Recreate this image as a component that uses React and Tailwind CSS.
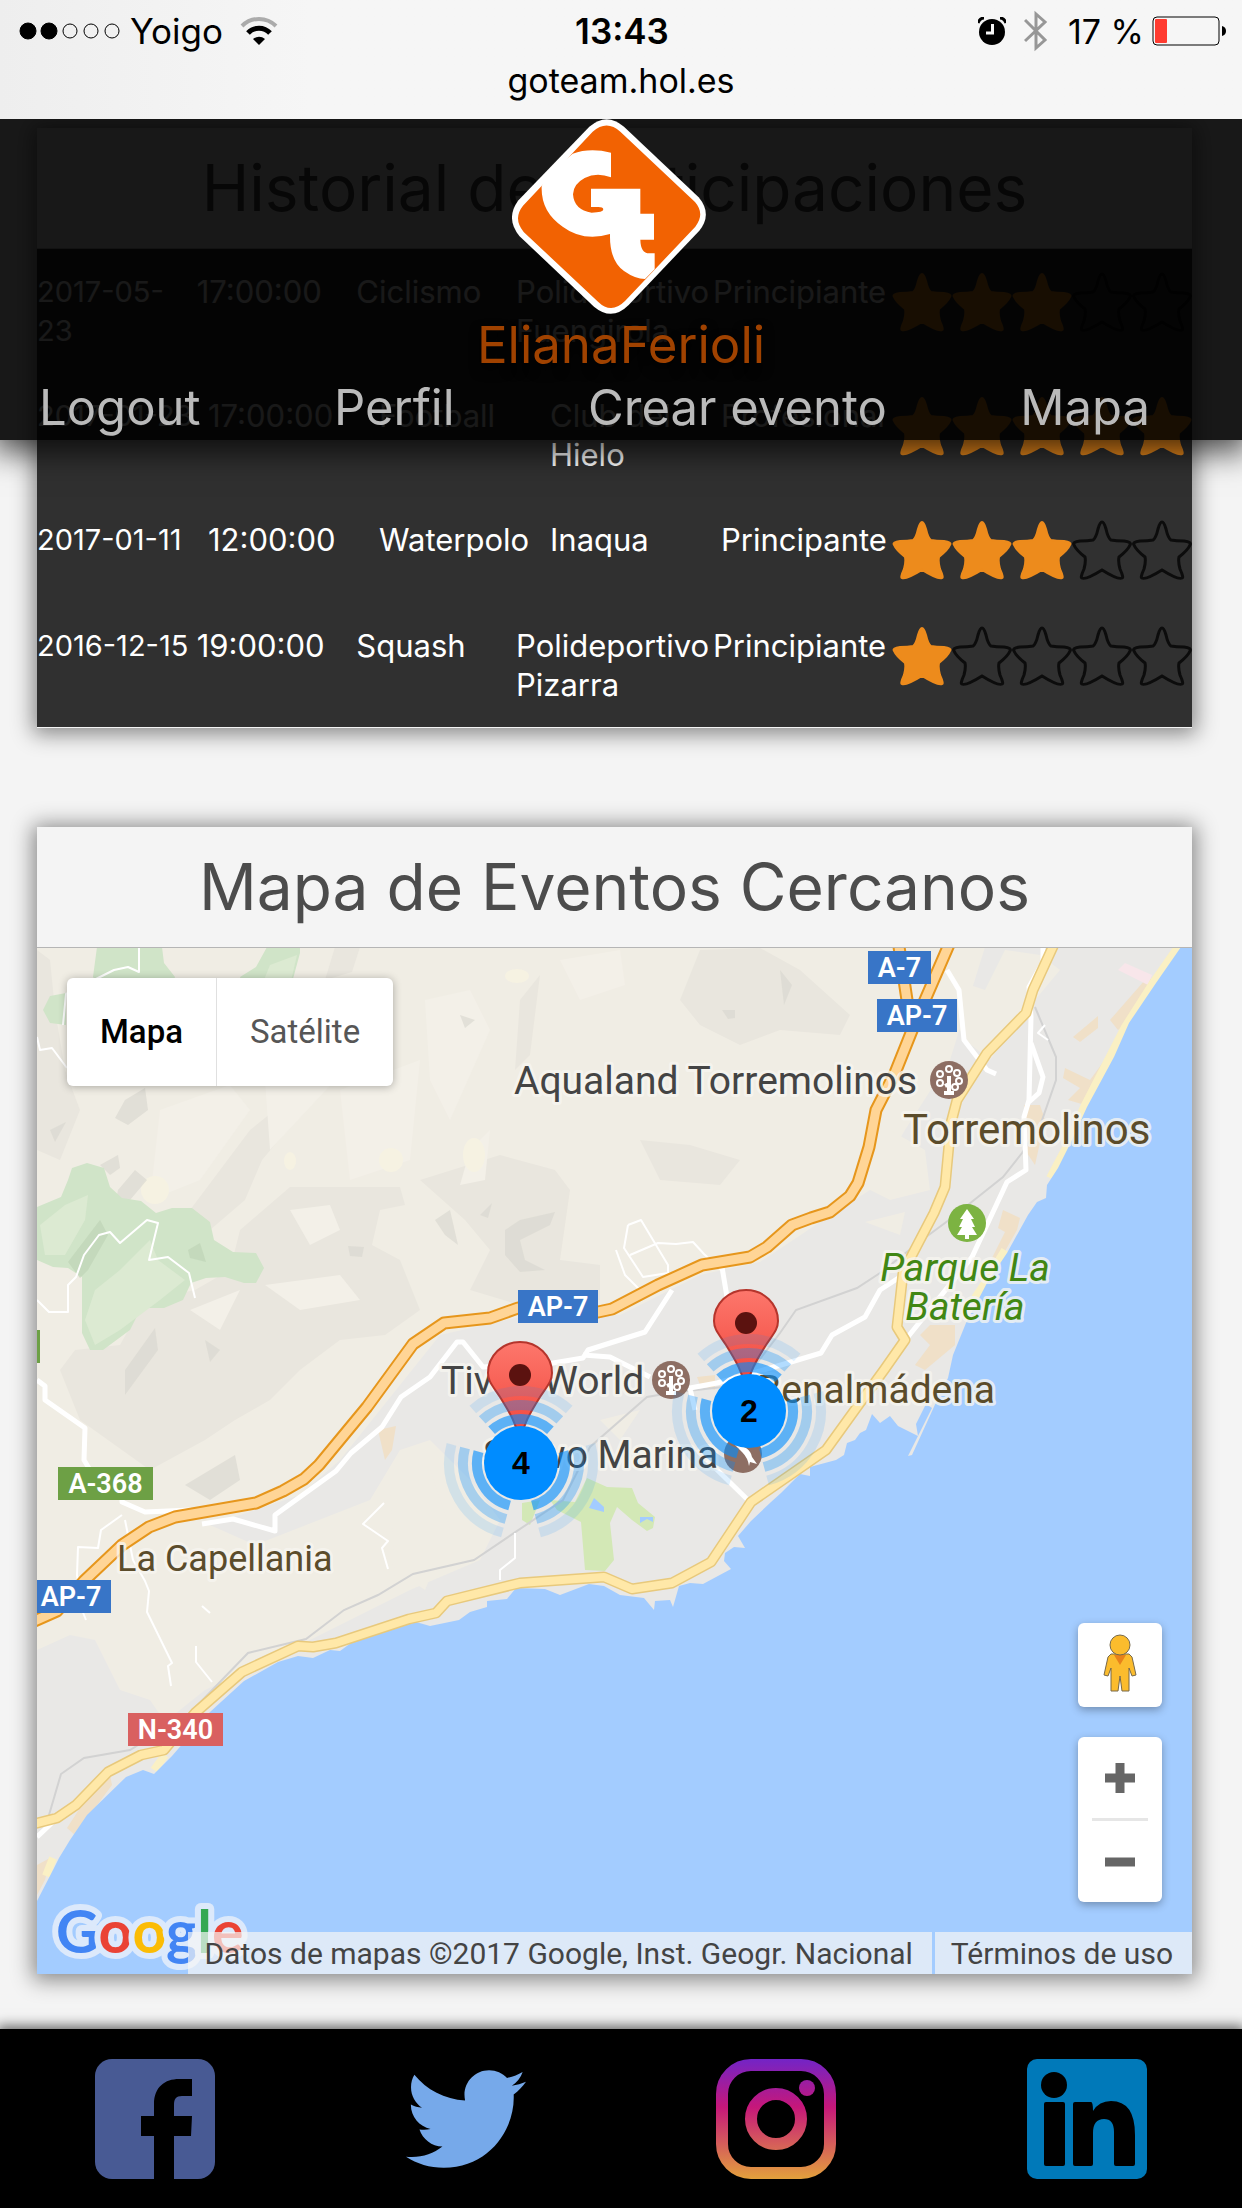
import React from "react";
import { FaTwitter } from "react-icons/fa";

const events = [
  { date: ["2017-05-", "23"], time: "17:00:00", sport: "Ciclismo", place: ["Polideportivo", "Fuengirola"], level: "Principiante", stars: 3 },
  { date: ["2017-01-23"], time: "17:00:00", sport: "Football", place: ["Club del", "Hielo"], level: "Profesional", stars: 5 },
  { date: ["2017-01-11"], time: "12:00:00", sport: "Waterpolo", place: ["Inaqua"], level: "Principante", stars: 3 },
  { date: ["2016-12-15"], time: "19:00:00", sport: "Squash", place: ["Polideportivo", "Pizarra"], level: "Principiante", stars: 1 },
];

function SignalDots() {
  return (
    <svg className="h-6 w-[104px]" viewBox="0 0 104 24" aria-hidden="true">
      {[0, 1, 2, 3, 4].map((i) => (
        <circle key={i} cx={10 + i * 21} cy="12" r={i < 2 ? 8 : 7} fill={i < 2 ? "#000" : "none"} stroke="#000" strokeWidth="1" />
      ))}
    </svg>
  );
}

function Wifi() {
  return (
    <svg className="h-8 w-10" viewBox="0 0 40 32" fill="none" aria-hidden="true">
      <path d="M3 11A24 24 0 0 1 37 11" stroke="#ababab" strokeWidth="4" />
      <path d="M9 18A15 15 0 0 1 31 18" stroke="#000" strokeWidth="5" />
      <path d="M14 24A9 9 0 0 1 26 24L20 30Z" fill="#000" />
    </svg>
  );
}

function Alarm() {
  return (
    <svg className="h-7 w-7" viewBox="0 0 28 28" fill="none" aria-hidden="true">
      <circle cx="14" cy="15" r="13" fill="#000" />
      <path d="M0 6Q2 1 6 1M28 6Q26 1 22 1" stroke="#000" strokeWidth="3" />
      <path d="M14.500 7V16H8" stroke="#f6f6f6" strokeWidth="3" />
    </svg>
  );
}

function Bluetooth() {
  return (
    <svg className="h-[42px] w-6" viewBox="0 0 24 42" fill="none" aria-hidden="true">
      <path d="M1 10L21 30L12 38V4L21 12L1 31" stroke="#979797" strokeWidth="3" />
    </svg>
  );
}

function Battery() {
  return (
    <svg className="h-[30px] w-[74px]" viewBox="0 0 74 30" aria-hidden="true">
      <rect x="1" y="1" width="66" height="28" rx="4" fill="none" stroke="#000" strokeWidth="1" />
      <rect x="3" y="3" width="12" height="24" rx="1" fill="#ff3b30" />
      <path d="M70 10Q74 11 74 15Q74 19 70 20Z" fill="#000" />
    </svg>
  );
}

function Logo() {
  return (
    <svg className="h-[195px] w-[194px]" viewBox="186 27 582 585" role="img" aria-label="GoTeam">
      <path d="M418 50Q470 5 522 50L746 262Q788 312 748 362L536 585Q486 635 432 590L208 378Q166 326 204 272Z" fill="#fff" />
      <path d="M428 65Q470 28 511 65L735 276Q766 312 736 350L525 573Q484 614 444 575L221 366Q188 326 219 287Z" fill="#f26202" />
      <path d="M368 131Q420 112 483 128V202Q440 186 404 204Q370 222 369 253Q372 300 425 308Q460 308 460 298Q459 291 445 291H423V236H571V311H612V389H571Q572 432 600 430H614V478L585 507Q556 507 522 483Q478 452 480 372Q400 396 338 350Q272 305 275 229L290 195Z" fill="#fff" />
    </svg>
  );
}

function Star({ filled }) {
  return (
    <svg className="h-[60px] w-[60px] shrink-0" viewBox="0 0 60 60" aria-hidden="true">
      <path
        d="M30 2Q32 2 34 9Q36 18 39 20Q44 21 52 21Q60 22 58 25Q56 30 47 37Q46 42 48 49Q52 58 50 58Q46 60 30 50Q14 60 10 58Q8 58 12 49Q14 42 13 37Q4 30 2 25Q0 22 8 21Q16 21 21 20Q24 18 26 9Q28 2 30 2Z"
        fill={filled ? "#ed8b1c" : "none"}
        stroke={filled ? "#ed8b1c" : "#0c0c0c"}
        strokeWidth={filled ? "2" : "3"}
      />
    </svg>
  );
}

function Lines({ parts }) {
  return parts.map((p) => (
    <span key={p} className="block whitespace-nowrap">{p}</span>
  ));
}

function History() {
  return (
    <section className="bg-[#f4f4f4] pb-px shadow-[0_2px_20px_4px_rgba(0,0,0,0.45)]">
      <h2 className="border-b border-[#b5b5b5] py-5 text-center text-[64px] leading-20 text-[#4c4c4c]">Historial de Participaciones</h2>
      <table className="block bg-[#303030] text-[31px] leading-[39px] text-white">
        <tbody className="block">
          {events.map((e) => (
            <tr key={e.date.join("")} className="flex items-start py-[23px]">
              <td className="min-w-0 flex-1 text-[29px]"><Lines parts={e.date} /></td>
              <td className="flex-1">{e.time}</td>
              <td className="flex-1">{e.sport}</td>
              <td className={e.place[0] === "Polideportivo" ? "min-w-[197px] flex-1" : "flex-1"}><Lines parts={e.place} /></td>
              <td className={e.level === "Principiante" ? "min-w-[179px] flex-1" : "flex-1"}>{e.level}</td>
              <td className="flex shrink-0" aria-label={e.stars + " de 5"}>
                {[1, 2, 3, 4, 5].map((n) => <Star key={n} filled={n <= e.stars} />)}
              </td>
            </tr>
          ))}
        </tbody>
      </table>
    </section>
  );
}

const motorway = "M951 940L915 1023L895 1073L876 1110L869 1147L858 1183L850 1196L830 1212L811 1218L792 1225L767 1247L750 1257L702 1265L658 1285L612 1309L598 1312L518 1308L490 1318L444 1323L413 1344L367 1407L319 1465L304 1479L283 1491L256 1503L175 1517L149 1527L122 1545L84 1581L57 1611L30 1623";
const coastRoad = "M1056 940L1033 990L1026 1013L987 1053L957 1100L951 1123L945 1187L934 1213L911 1257L903 1273L897 1327L905 1340L884 1370L857 1407L826 1450L751 1502L733 1529L711 1562L672 1583L632 1589L604 1577L520 1583L447 1601L436 1613L409 1619L336 1643L313 1647L298 1646L242 1672L195 1713L164 1750L141 1755L108 1772L76 1805L57 1818L30 1825";
const sea = "M1181 947L1156 983L1129 1023L1114 1057L1087 1107L1072 1140L1058 1168L1047 1185L1046 1198L1037 1202L1028 1215L1007 1253L987 1283L966 1323L953 1355L948 1378L938 1398L912 1455L908 1456L932 1408L926 1404L916 1424L918 1436L898 1426L890 1416L880 1423L872 1414L866 1430L860 1433L855 1440L847 1443L844 1455L836 1460L810 1467V1476L800 1474L781 1493L771 1502L751 1521L738 1536L745 1548L734 1547L725 1553L724 1561L731 1569L703 1584L690 1583L679 1586L673 1607L670 1600L655 1601L654 1610L644 1598L620 1595L604 1586L589 1584L560 1595L545 1589L516 1588L507 1599L487 1601V1607L470 1612L459 1620L430 1626L416 1622L363 1638L351 1643L340 1651L330 1650L313 1658L298 1656L278 1662L244 1681L210 1712L172 1756L154 1774L143 1770L126 1777L87 1815L70 1840L59 1858L53 1870L37 1901V1974H1192V947Z";
const railway = "M1035 1007L1056 1057V1080L1041 1123L1022 1153L1003 1177L949 1220L926 1237L880 1273L857 1288L796 1310L780 1333L740 1385L670 1393L647 1397L590 1447L563 1500L474 1560L413 1574L378 1595L344 1610L306 1639L248 1653L191 1712L130 1750L84 1758L61 1774L49 1815";
const wideRoads = [
  "M1043 947V962L1029 987L1031 1017L1029 1100L1024 1117L1026 1170L1007 1182L972 1257L907 1338",
  "M947 970L959 990L964 1040L987 1070L996 1074",
  "M1031 1043L1043 1077L1039 1093L1029 1102",
  "M903 1275L880 1290L865 1317L832 1335L821 1353L781 1365L717 1383L690 1388L695 1410",
  "M722 1267L727 1297",
  "M672 1290L645 1332L588 1350L583 1358L553 1363L483 1367L463 1342H457L430 1377L401 1397L382 1427L351 1453L336 1471L275 1515V1531L233 1519L202 1524",
  "M583 1355L610 1357L650 1377",
  "M707 1460L750 1502",
  "M37 1380L45 1386V1400L85 1428L84 1460L90 1470",
  "M122 1490V1502L145 1512L191 1510",
  "M57 1818L37 1837",
];
const thinRoads = [
  "M37 1300L49 1312H68V1285L76 1277L84 1255L99 1235L110 1232L120 1243L147 1220L158 1223L149 1260L168 1257L189 1273L195 1298",
  "M139 947V972L128 967L114 970L66 994L63 1025",
  "M37 1037L40 1050L52 1048L67 1068",
  "M122 1515L101 1530L98 1548L78 1547L77 1575L82 1610L86 1620",
  "M125 1520L133 1560L145 1581L149 1591L147 1612L172 1663L168 1666L171 1686",
  "M196 1646V1662L212 1682",
  "M384 1503L363 1524L388 1541L382 1548L388 1569",
  "M628 1225L641 1220L668 1265V1273L643 1277L624 1248L628 1225M630 1255L658 1243L676 1244L693 1242L704 1254L721 1270",
  "M616 1250L625 1275L640 1290",
  "M515 1533V1558L500 1570V1580",
  "M1045 1025L1038 1033L1048 1040",
  "M202 1606L210 1613",
];
const hills = [
  "M37 950L50 960L55 1010L65 1070L80 1110L60 1160L37 1150Z",
  "M335 947H360L352 972L325 980Z",
  "M250 1130L300 1090L330 1075L300 1115L262 1160L245 1200L210 1230L190 1210Z",
  "M290 1187H400L405 1205L380 1210L372 1245L400 1260L420 1310L385 1335L340 1340L300 1370L270 1400L235 1420L205 1440L150 1470L80 1420L60 1370L75 1350L120 1345L145 1300L195 1290L230 1270L240 1230Z",
  "M420 1180L500 1155L555 1170L570 1190L560 1260L600 1265V1300L520 1305L470 1290L490 1250L465 1220Z",
  "M700 950L760 948L800 970L850 1015L840 1035L780 1030L740 1045L700 1025L680 1000Z",
  "M640 1140L690 1145L740 1160L720 1185L660 1180Z",
  "M520 1000L540 975L530 1055L515 1070Z",
];
const ridges = [
  "M125 1100L145 1088L148 1110L128 1125L115 1118Z",
  "M100 1165L118 1155L120 1168L110 1175Z",
  "M118 1190L135 1170L147 1180L130 1200L115 1205Z",
  "M505 1230L520 1220L555 1212L550 1225L520 1240L525 1260L545 1270L520 1272L505 1255Z",
  "M435 1220L450 1210L458 1245L445 1235Z",
  "M480 1215L492 1203L488 1218Z",
  "M348 1246L364 1247L362 1257L350 1256Z",
  "M125 1370L155 1328L158 1350L125 1395Z",
  "M205 1340L220 1350L210 1362Z",
  "M185 1485L235 1455L240 1480L210 1500Z",
  "M722 1010L735 1010V1018L728 1019Z",
  "M460 1015L475 1020L465 1028Z",
  "M780 970L792 985L784 1005Z",
  "M50 1130L66 1122L55 1142Z",
];
const light = [
  "M160 1110L230 1085L250 1110L200 1180L150 1200Z",
  "M340 1090L420 1060L410 1160L350 1180Z",
  "M425 1000L470 990L490 1030L450 1120L430 1080Z",
  "M265 1080L340 1075L270 1150Z",
  "M560 960L620 950L625 985L580 1000Z",
  "M265 1285L340 1275L360 1300L300 1310Z",
  "M290 1210L330 1205L340 1230L310 1245Z",
  "M190 1310L240 1290L220 1330Z",
  "M470 1150L490 1130L485 1180L460 1185Z",
];

const halo = { stroke: "#f7f5f0", strokeOpacity: 0.8, strokeWidth: 6, strokeLinejoin: "round", paintOrder: "stroke" };

function Shield({ x, y, w, label, color }) {
  return (
    <g>
      <rect x={x} y={y} width={w} height="33" fill={color} />
      <text x={x + w / 2} y={y + 26} textAnchor="middle" fontSize="27" fontWeight="600" fill="#fff">{label}</text>
    </g>
  );
}

function ParkPoi({ x, y }) {
  return (
    <g transform={"translate(" + x + " " + y + ")"} stroke="#fff" fill="none">
      <circle r="19" fill="#8d6e63" stroke="none" />
      <path d="M0 -4V12M-5 13H5M-4 6L0 4" strokeWidth="4" />
      {[[-9, 3], [-9, -6], [0, -11], [8, -7], [10, 1], [6, 7]].map(([a, b]) => (
        <circle key={a + "," + b} cx={a} cy={b} r="3" strokeWidth="2" />
      ))}
    </g>
  );
}

function Pin({ x, y }) {
  return (
    <g transform={"translate(" + x + " " + y + ")"}>
      <path d="M0 66C-3 50 -10 38 -20 22C-28 10 -32 6 -32 -2A32 31 0 0 1 32 -2C32 6 28 10 20 22C10 38 3 50 0 66Z" fill="url(#pin)" stroke="#b5352c" strokeWidth="2" />
      <circle r="11" fill="#5b120f" />
    </g>
  );
}

function arc(r, from, to) {
  const p = (deg) => {
    const t = (deg * Math.PI) / 180;
    return (r * Math.cos(t)).toFixed(1) + " " + (r * Math.sin(t)).toFixed(1);
  };
  return "M" + p(from) + "A" + r + " " + r + " 0 0 1 " + p(to);
}

function Cluster({ x, y, count }) {
  const rings = [[44, 0.6], [58, 0.3], [72, 0.12]];
  return (
    <g transform={"translate(" + x + " " + y + ")"}>
      {rings.map(([r, o]) => (
        <path key={r} d={arc(r, -132, -48) + arc(r, -15, 75) + arc(r, 105, 195)} fill="none" stroke="#008cff" strokeOpacity={o} strokeWidth="10" />
      ))}
      <circle r="37" fill="#008cff" />
      <text y="11" textAnchor="middle" fontSize="32" fontWeight="700" fontFamily="Liberation Sans, sans-serif" fill="#000">{count}</text>
    </g>
  );
}

function MapDrawing() {
  return (
    <svg className="block h-auto w-full" viewBox="37 948 1155 1026" fontFamily="Roboto, sans-serif" role="img" aria-label="Mapa de eventos">
      <defs>
        <linearGradient id="pin" x1="0" y1="0" x2="0" y2="1">
          <stop offset="0" stopColor="#fd776c" />
          <stop offset="1" stopColor="#f0443a" />
        </linearGradient>
      </defs>
      <rect x="37" y="947" width="1155" height="1027" fill="#f0ede4" />
      <g fill="#e9e6de">{hills.map((d) => <path key={d} d={d} />)}</g>
      <g fill="#f3f0e8">{light.map((d) => <path key={d} d={d} />)}</g>
      <g fill="#f6f2e2">
        <ellipse cx="391" cy="1160" rx="12" ry="12" /><ellipse cx="474" cy="1155" rx="11" ry="17" /><ellipse cx="290" cy="1161" rx="6" ry="9" />
        <ellipse cx="517" cy="976" rx="12" ry="7" /><ellipse cx="155" cy="1190" rx="14" ry="14" />
      </g>
      <path d="M985 947L950 1060L905 1130L870 1190L820 1222L760 1262L700 1275L620 1315L520 1317L440 1335L400 1385L340 1460L300 1495L210 1525L255 1545L370 1500L400 1450L430 1440L470 1480L500 1520L480 1560L410 1590L340 1625L280 1655L205 1690L165 1722L150 1700L120 1690L95 1640L70 1635L37 1650V1974H1192V947Z" fill="#e9e8e6" />
      <g fill="#f0ede4">
        <path d="M940 975L985 990L1005 950L1040 955L1060 970L1035 1000L990 1060L965 1040L950 1010Z" />
        <path d="M890 1130L925 1150L930 1190L890 1200L860 1185Z" />
        <path d="M390 1480L430 1470L450 1530L425 1590L395 1570Z" />
        <path d="M330 1540L385 1525L395 1580L340 1600Z" />
        <path d="M600 1420L640 1410L620 1440Z" />
        <path d="M865 1222L905 1212L900 1235Z" />
      </g>
      <g fill="#d9d7d0">{ridges.map((d) => <path key={d} d={d} opacity="0.65" />)}</g>
      <g fill="#d0e4c8">
        <path d="M68 1180L72 1168L87 1163L104 1168L110 1187L122 1198L141 1201L156 1213L172 1208H192L210 1222L214 1240L233 1252L256 1253L264 1268L256 1283H244L225 1277L206 1278L191 1283L183 1300L164 1308L141 1308L130 1330L103 1350H90L82 1333V1277L68 1268L53 1267L37 1260V1207L61 1197Z" />
        <path d="M97 947L93 977L102 990L170 990L175 977L164 963L162 947Z" />
        <path d="M267 947L256 967L240 977L245 990H290L300 953V947Z" />
        <path d="M43 1010L50 996L66 993V1025L50 1023Z" />
      </g>
      <g fill="#dcead2">
        <path d="M40 1225L65 1205L88 1195L85 1220L65 1255L45 1255Z" />
        <path d="M95 1290L120 1270L150 1240L158 1260L185 1280L160 1300L120 1330L95 1345L85 1320Z" />
        <path d="M270 965L297 955L290 985H262Z" />
      </g>
      <path d="M68 1262L100 1220L108 1235L88 1270L80 1278Z" fill="#bfd4b6" opacity="0.7" />
      <path d="M188 1250L200 1243L206 1262L190 1258Z" fill="#bfd4b6" opacity="0.7" />
      <path d="M587 1478L607 1487L632 1488L638 1503L655 1517L653 1528L647 1531L632 1520L617 1507L610 1523L614 1560L605 1571L585 1570L581 1522L557 1510L550 1500L575 1502ZM522 1503L540 1500L530 1525L522 1520Z" fill="#d3e8b6" />
      <path d="M589 1508L594 1498L604 1507V1512ZM640 1517H653V1522L647 1519L640 1523Z" fill="#a3ccff" />
      <g fill="#f0e0c8">
        <path d="M1073 1037L1098 1016L1098 1028L1080 1042Z" />
        <path d="M1110 1020L1145 980L1158 978L1130 1020L1118 1030Z" />
        <path d="M1065 1068L1090 1080L1112 1050L1110 1065L1085 1105L1068 1100L1080 1088L1063 1078Z" />
        <path d="M1024 1105L1040 1105L1045 1120L1035 1165L1025 1150Z" />
        <path d="M1003 1210L1020 1218L1017 1230L1000 1260L992 1258L1005 1232L998 1228Z" />
        <path d="M930 1325L955 1325L955 1345L925 1370L915 1365L930 1345L920 1335Z" />
        <path d="M378 1430L396 1426L392 1450L385 1460Z" />
        <path d="M80 1808L110 1775L112 1785L75 1835L67 1828Z" />
        <path d="M37 1865L50 1858L45 1880L37 1895Z" />
        <path d="M697 1377L715 1375V1390L700 1385Z" />
      </g>
      <path d="M1125 963L1152 975L1148 985L1118 970Z" fill="#f8e6ea" />
      <g fill="none" stroke="#faf0c4" strokeWidth="8">
        <path d="M1178 947L1153 983L1125 1027L1084 1107L1070 1140L1050 1178" />
        <path d="M1005 1250L985 1283L975 1298M165 1755L154 1770M53 1858L46 1876" />
      </g>
      <path d={sea} fill="#a3ccff" />
      <path d={railway} fill="none" stroke="#d2d2d2" strokeWidth="2" />
      <g fill="none" stroke="#fff" strokeWidth="2" strokeLinejoin="round">{thinRoads.map((d) => <path key={d} d={d} />)}</g>
      <g fill="none" stroke="#fff" strokeWidth="5" strokeLinejoin="round">{wideRoads.map((d) => <path key={d} d={d} />)}</g>
      <path d={coastRoad} fill="none" stroke="#e8c97c" strokeWidth="11" strokeLinejoin="round" />
      <path d={coastRoad} fill="none" stroke="#ffe8a8" strokeWidth="8" strokeLinejoin="round" />
      <path d={"M898 940L907 1000L913 1030" + motorway} fill="none" stroke="#e6961c" strokeWidth="13" strokeLinejoin="round" />
      <path d={"M898 940L907 1000L913 1030" + motorway} fill="none" stroke="#ffd596" strokeWidth="9" strokeLinejoin="round" />

      <Shield x={868} y={951} w={63} label="A-7" color="#3875c7" />
      <Shield x={877} y={999} w={80} label="AP-7" color="#3875c7" />
      <Shield x={518} y={1290} w={80} label="AP-7" color="#3875c7" />
      <Shield x={31} y={1580} w={80} label="AP-7" color="#3875c7" />
      <Shield x={58} y={1467} w={95} label="A-368" color="#6da045" />
      <Shield x={128} y={1713} w={95} label="N-340" color="#d96060" />
      <rect x="37" y="1330" width="3" height="33" fill="#6da045" />

      <g fontSize="39" fill="#444" {...halo}>
        <text x="514" y="1094">Aqualand Torremolinos</text>
        <text x="441" y="1394">Tivoli World</text>
        <text x="483" y="1468">Selwo Marina</text>
      </g>
      <g fill="#5b4c2b" {...halo}>
        <text x="903" y="1144" fontSize="42">Torremolinos</text>
        <text x="757" y="1403" fontSize="39">Benalmádena</text>
        <text x="117" y="1571" fontSize="36">La Capellania</text>
      </g>
      <g fontSize="39" fontStyle="italic" fill="#418713" textAnchor="middle" {...halo}>
        <text x="965" y="1281">Parque La</text>
        <text x="965" y="1320">Batería</text>
      </g>
      <ParkPoi x={949} y={1080} />
      <ParkPoi x={671} y={1380} />
      <circle cx="743" cy="1454" r="19" fill="#8d6e63" />
      <path d="M735 1445Q750 1446 752 1457L757 1464L750 1462L749 1466Q748 1458 742 1452Z" fill="#fff" />
      <circle cx="967" cy="1223" r="19" fill="#7cb342" />
      <path d="M967 1209L974 1219H971L975 1227H972L977 1235H969V1239H965V1235H957L962 1227H959L963 1219H960Z" fill="#fff" />
      <Pin x={520} y={1375} />
      <Pin x={746} y={1323} />
      <Cluster x={521} y={1463} count="4" />
      <Cluster x={749} y={1411} count="2" />
      <text x="56" y="1953" fontSize="59" fontWeight="700" fontFamily="Lato, sans-serif" stroke="#dce9fb" strokeWidth="12" strokeLinejoin="round" paintOrder="stroke">
        <tspan fill="#4285f4">G</tspan><tspan fill="#ea4335">o</tspan><tspan fill="#fbbc05">o</tspan><tspan fill="#4285f4">g</tspan><tspan fill="#34a853">l</tspan><tspan fill="#ea4335">e</tspan>
      </text>
    </svg>
  );
}

function Pegman() {
  return (
    <svg className="h-[58px] w-[34px]" viewBox="0 0 34 58" stroke="#77694b" strokeWidth="1" aria-hidden="true">
      <path d="M8 20H26L29 23L33 41L29 42L26 34V57H19L17 42L15 57H8V34L5 42L1 41L5 23Z" fill="#fbbc2d" />
      <path d="M11 21H23L17 31Z" fill="#e8821a" stroke="none" />
      <circle cx="17" cy="11" r="10" fill="#fbbc2d" />
    </svg>
  );
}

function EventsMap() {
  return (
    <section className="bg-[#f4f4f4] shadow-[0_2px_20px_4px_rgba(0,0,0,0.45)]">
      <h2 className="border-b border-[#b5b5b5] py-5 text-center text-[64px] leading-20 text-[#4c4c4c]">Mapa de Eventos Cercanos</h2>
      <div className="relative overflow-hidden font-[Roboto,sans-serif]">
        <MapDrawing />
        <div className="absolute top-[30px] left-[30px] flex h-[108px] rounded-md bg-white text-[33px] shadow-[0_1px_9px_rgba(0,0,0,0.3)]">
          <button className="border-r border-[#e0e0e0] px-[33px] font-medium text-black">Mapa</button>
          <button className="px-[33px] text-[#565656]">Satélite</button>
        </div>
        <div className="absolute right-[30px] bottom-[72px] flex w-[84px] flex-col gap-[30px]">
          <button aria-label="Street View" className="flex h-[84px] items-center justify-center rounded-md bg-white pb-1 shadow-[0_3px_9px_rgba(0,0,0,0.3)]"><Pegman /></button>
          <div className="flex flex-col items-center rounded-md bg-white shadow-[0_3px_9px_rgba(0,0,0,0.3)]">
            <button aria-label="Acercar" className="flex h-[81px] w-full items-center justify-center">
              <svg className="h-8 w-8" viewBox="0 0 32 32" stroke="#666" strokeWidth="9" aria-hidden="true"><path d="M1 16H31M16 1V31" /></svg>
            </button>
            <div className="h-[3px] w-14 bg-[#e6e6e6]" />
            <button aria-label="Alejar" className="flex h-[81px] w-full items-center justify-center">
              <svg className="h-8 w-8" viewBox="0 0 32 32" stroke="#666" strokeWidth="9" aria-hidden="true"><path d="M1 16H31" /></svg>
            </button>
          </div>
        </div>
        <div className="absolute right-0 bottom-0 flex gap-[3px] text-[30px] leading-10 whitespace-nowrap text-[#444]">
          <span className="bg-[#f5f5f5]/70 pt-0.5 pr-[19px] pl-4">Datos de mapas ©2017 Google, Inst. Geogr. Nacional</span>
          <a href="#terminos" className="bg-[#f5f5f5]/70 pt-0.5 pr-[19px] pl-4">Términos de uso</a>
        </div>
      </div>
    </section>
  );
}

function Facebook() {
  return (
    <svg className="h-[120px] w-[120px]" viewBox="0 0 120 120" aria-hidden="true">
      <rect width="120" height="120" rx="17" fill="#485a94" />
      <path d="M59 120V77H46V57H59V45C59 28 70 20 84 20H97V37H87C81 37 79 40 79 46V57H97L96 77H79V120Z" fill="#000" />
    </svg>
  );
}

function Instagram() {
  return (
    <svg className="h-[120px] w-[120px]" viewBox="0 0 120 120" fill="none" aria-hidden="true">
      <defs>
        <linearGradient id="insta" gradientUnits="userSpaceOnUse" x1="0" y1="0" x2="0" y2="120">
          <stop offset="0" stopColor="#7324c6" />
          <stop offset="0.4" stopColor="#c6177a" />
          <stop offset="1" stopColor="#e3a13c" />
        </linearGradient>
      </defs>
      <rect x="6" y="6" width="108" height="108" rx="29" stroke="url(#insta)" strokeWidth="12" />
      <circle cx="60" cy="60" r="25" stroke="url(#insta)" strokeWidth="12" />
      <circle cx="91" cy="29" r="8" fill="url(#insta)" />
    </svg>
  );
}

function LinkedIn() {
  return (
    <svg className="h-[120px] w-[120px]" viewBox="0 0 120 120" aria-hidden="true">
      <rect width="120" height="120" rx="10" fill="#0079b9" />
      <circle cx="27" cy="26" r="13" fill="#000" />
      <rect x="17" y="43" width="21" height="64" rx="2" fill="#000" />
      <path d="M48 43H64Q66 43 66 52Q72 42 84 42Q108 42 108 76V105Q108 107 106 107H89Q87 107 87 105V73Q87 60 77 60Q66 60 66 74V105Q66 107 64 107H48Q46 107 46 105V45Q46 43 48 43Z" fill="#000" />
    </svg>
  );
}

export default function App() {
  return (
    <div className="flex min-h-screen flex-col bg-[#f4f4f4] font-[Inter,sans-serif]">
      <header className="relative z-20 bg-linear-to-r from-[#eeeeee] via-[#f6f6f6] via-25% to-[#f6f6f6] text-[34px] text-black">
        <div className="grid h-[62px] grid-cols-3 items-center pr-4 pl-[18px]">
          <div className="flex items-center">
            <SignalDots /><span className="mr-4 ml-2 text-[35px]">Yoigo</span><Wifi />
          </div>
          <div className="text-center text-[35px] font-semibold">13:43</div>
          <div className="flex items-center justify-end">
            <Alarm /><span className="ml-[18px]"><Bluetooth /></span><span className="mr-2 ml-5">17 %</span><Battery />
          </div>
        </div>
        <div className="h-[57px] text-center leading-[38px]">goteam.hol.es</div>
      </header>
      <div className="relative flex flex-1 flex-col">
        <nav className="absolute inset-x-0 top-0 z-10 bg-black/90 shadow-[0_6px_30px_6px_rgba(0,0,0,0.7)]">
          <div className="flex flex-col items-center">
            <span className="mr-6"><Logo /></span>
            <a href="#perfil" className="text-[51px] leading-[62px] text-[#a04200] [text-shadow:0_6px_12px_#000]">ElianaFerioli</a>
          </div>
          <div className="flex justify-between pr-[92px] pl-[39px] text-[49px] leading-16 text-[#bababa]">
            <a href="#logout">Logout</a><a href="#perfil">Perfil</a><a href="#crear">Crear evento</a><a href="#mapa">Mapa</a>
          </div>
        </nav>
        <main className="flex flex-col gap-[99px] pt-[9px] pr-[50px] pb-[55px] pl-[37px]">
          <History />
          <EventsMap />
        </main>
        <footer className="relative grid flex-1 grid-cols-4 place-items-center bg-black shadow-[0_0_12px_3px_rgba(0,0,0,0.6)]">
          <a href="#facebook" aria-label="Facebook"><Facebook /></a>
          <a href="#twitter" aria-label="Twitter"><FaTwitter className="h-[120px] w-[120px] text-[#76a9ea]" /></a>
          <a href="#instagram" aria-label="Instagram"><Instagram /></a>
          <a href="#linkedin" aria-label="LinkedIn"><LinkedIn /></a>
        </footer>
      </div>
    </div>
  );
}
